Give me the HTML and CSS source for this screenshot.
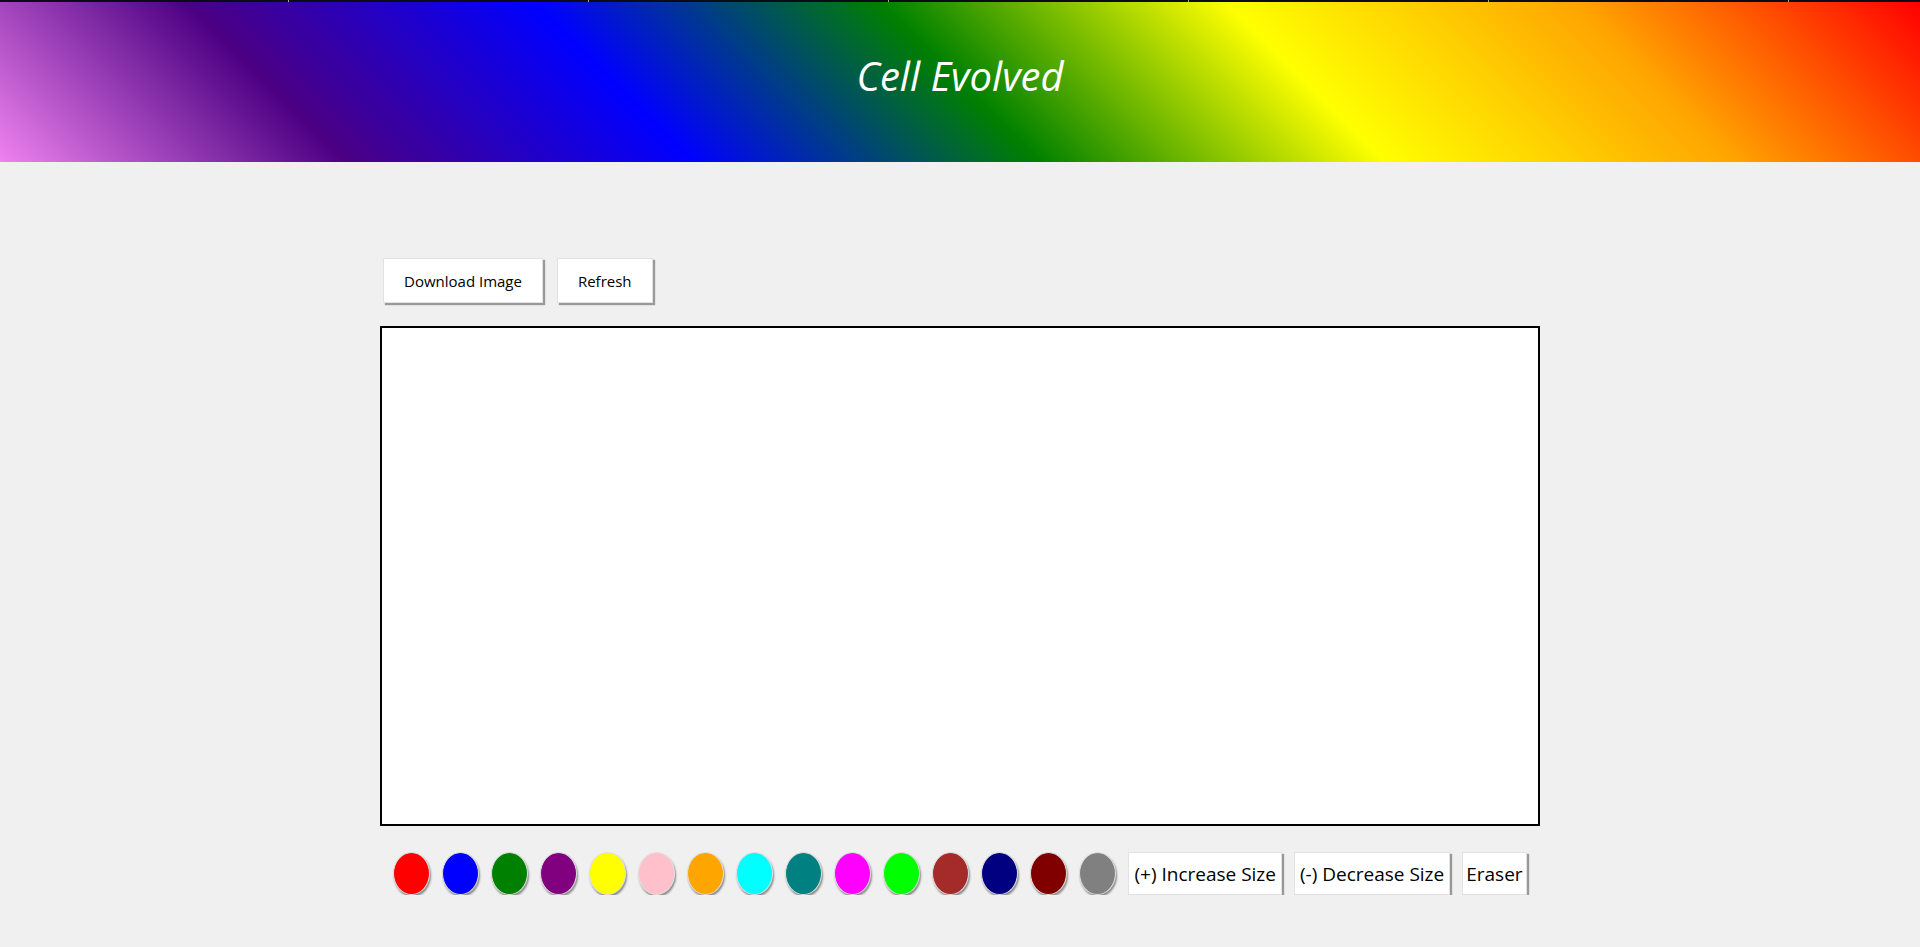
FILE: index.html
```html
<!DOCTYPE html>
<html lang="en">
<head>
<meta charset="utf-8">
<title>Cell Evolved</title>
<link rel="stylesheet" href="styles.css">
</head>
<body>
<header class="header">
  <div class="topline"></div>
  <div class="banner"><h1 class="title">Cell Evolved</h1></div>
</header>
<main class="main">
  <div class="toolbar">
    <button class="btn">Download Image</button>
    <button class="btn">Refresh</button>
  </div>
  <div class="canvas"></div>
  <div class="palette">
    <button class="swatch red"></button>
    <button class="swatch blue"></button>
    <button class="swatch green"></button>
    <button class="swatch purple"></button>
    <button class="swatch yellow"></button>
    <button class="swatch pink"></button>
    <button class="swatch orange"></button>
    <button class="swatch cyan"></button>
    <button class="swatch teal"></button>
    <button class="swatch magenta"></button>
    <button class="swatch lime"></button>
    <button class="swatch brown"></button>
    <button class="swatch navy"></button>
    <button class="swatch maroon"></button>
    <button class="swatch gray"></button>
    <button class="tool">(+) Increase Size</button>
    <button class="tool">(-) Decrease Size</button>
    <button class="tool eraser">Eraser</button>
  </div>
</main>
</body>
</html>
```
FILE: styles.css
```css
html, body {
  margin: 0;
  padding: 0;
}
body {
  background: #f0f0f0;
  font-family: "Open Sans", "Noto Sans", sans-serif;
  color: #000;
}
.header {
  display: flex;
  flex-direction: column;
}
.topline {
  height: 2px;
  background: repeating-linear-gradient(90deg, #0b0b18 0 288px, #b8b060 288px 289px, #0b0b18 289px 300px);
}
.banner {
  height: 160px;
  display: flex;
  align-items: center;
  justify-content: center;
  background: linear-gradient(45deg, violet, indigo, blue, green, yellow, orange, red);
}
.title {
  margin: 0 0 14px 0;
  font-family: "Open Sans", sans-serif;
  font-style: italic;
  font-weight: 400;
  font-size: 40px;
  color: #fff;
}
.main {
  width: 1160px;
  margin: 96px auto 0;
  display: flex;
  flex-direction: column;
}
.toolbar {
  display: flex;
  gap: 14px;
  padding-left: 3px;
}
.btn {
  height: 45px;
  padding: 0 20px;
  background: #fff;
  border: 1px solid #e2e2e2;
  box-shadow: 2px 2px 1px #999;
  font-family: "Open Sans", sans-serif;
  font-size: 15px;
  color: #000;
}
.canvas {
  margin-top: 23px;
  height: 496px;
  border: 2px solid #000;
  background: #fff;
}
.palette {
  margin-top: 26px;
  display: flex;
  justify-content: center;
  align-items: center;
  gap: 12px;
}
.swatch {
  width: 37px;
  height: 43px;
  padding: 0;
  border-radius: 50%;
  border: 1px solid #e0e0e0;
  box-shadow: 1px 2px 2px #8a8a8a;
}
.tool {
  height: 43px;
  padding: 0 5px;
  background: #fff;
  border: 1px solid #e2e2e2;
  box-shadow: 2px 2px 1px #999;
  font-family: "Open Sans", sans-serif;
  font-size: 19px;
  color: #000;
}
.eraser {
  padding: 0 3px;
}
.red { background: red; }
.blue { background: blue; }
.green { background: green; }
.purple { background: purple; }
.yellow { background: yellow; }
.pink { background: pink; }
.orange { background: orange; }
.cyan { background: cyan; }
.teal { background: teal; }
.magenta { background: magenta; }
.lime { background: lime; }
.brown { background: brown; }
.navy { background: navy; }
.maroon { background: maroon; }
.gray { background: gray; }
```
